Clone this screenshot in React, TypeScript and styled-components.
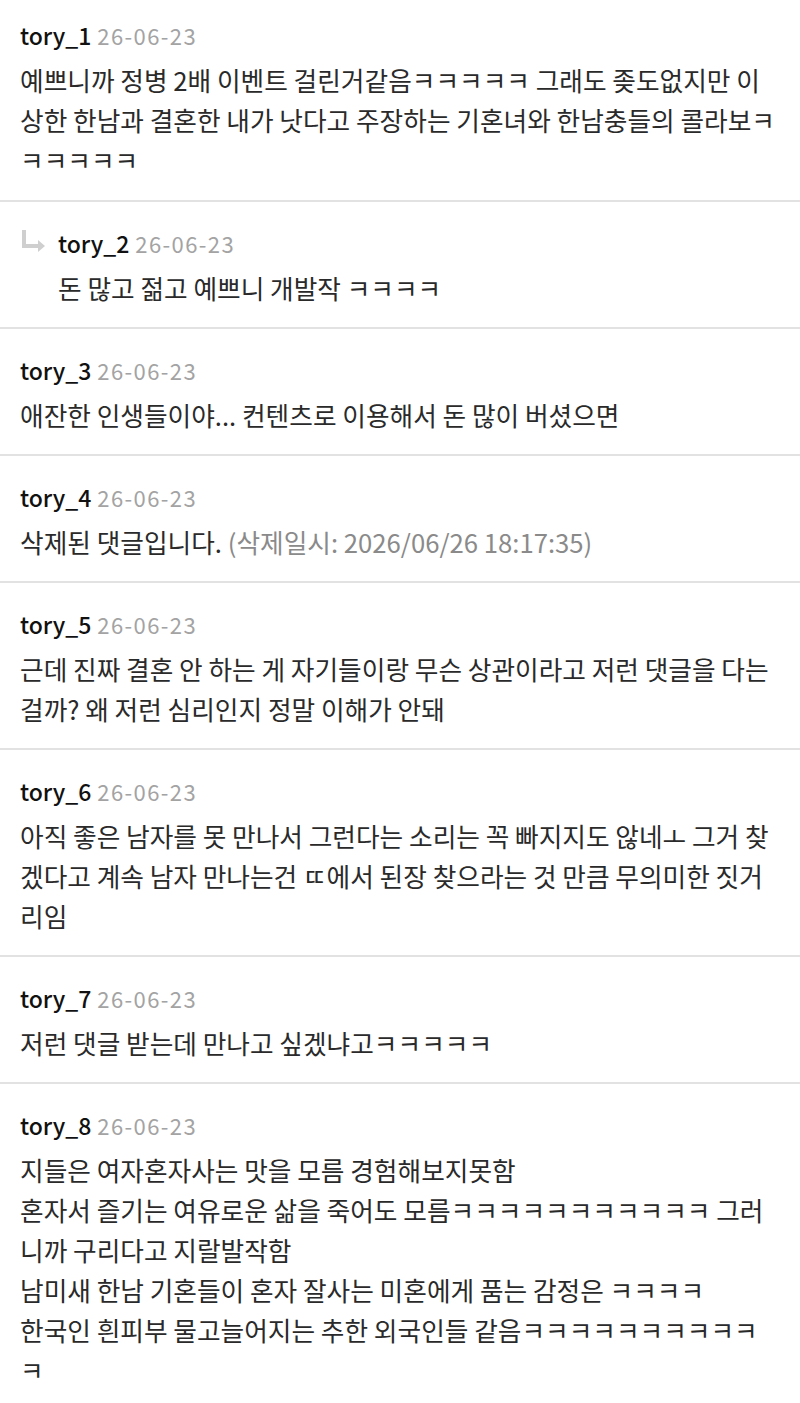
import React from 'react';
import styled, { createGlobalStyle } from "styled-components";

type Line = { text: string; muted?: string }
type CommentData = {
    name: string
    date: string
    reply?: boolean
    lines: Line[]
}

const comments: CommentData[] = [
    {
        name: "tory_1", date: "26-06-23", lines: [
            { text: "예쁘니까 정병 2배 이벤트 걸린거같음ㅋㅋㅋㅋㅋ 그래도 좆도없지만 이" },
            { text: "상한 한남과 결혼한 내가 낫다고 주장하는 기혼녀와 한남충들의 콜라보ㅋ" },
            { text: "ㅋㅋㅋㅋㅋ" },
        ]
    },
    { name: "tory_2", date: "26-06-23", reply: true, lines: [{ text: "돈 많고 젊고 예쁘니 개발작 ㅋㅋㅋㅋ" }] },
    { name: "tory_3", date: "26-06-23", lines: [{ text: "애잔한 인생들이야... 컨텐츠로 이용해서 돈 많이 버셨으면" }] },
    { name: "tory_4", date: "26-06-23", lines: [{ text: "삭제된 댓글입니다. ", muted: "(삭제일시: 2026/06/26 18:17:35)" }] },
    {
        name: "tory_5", date: "26-06-23", lines: [
            { text: "근데 진짜 결혼 안 하는 게 자기들이랑 무슨 상관이라고 저런 댓글을 다는" },
            { text: "걸까? 왜 저런 심리인지 정말 이해가 안돼" },
        ]
    },
    {
        name: "tory_6", date: "26-06-23", lines: [
            { text: "아직 좋은 남자를 못 만나서 그런다는 소리는 꼭 빠지지도 않네ㅗ 그거 찾" },
            { text: "겠다고 계속 남자 만나는건 ㄸ에서 된장 찾으라는 것 만큼 무의미한 짓거" },
            { text: "리임" },
        ]
    },
    { name: "tory_7", date: "26-06-23", lines: [{ text: "저런 댓글 받는데 만나고 싶겠냐고ㅋㅋㅋㅋㅋ" }] },
    {
        name: "tory_8", date: "26-06-23", lines: [
            { text: "지들은 여자혼자사는 맛을 모름 경험해보지못함" },
            { text: "혼자서 즐기는 여유로운 삶을 죽어도 모름ㅋㅋㅋㅋㅋㅋㅋㅋㅋㅋㅋ 그러" },
            { text: "니까 구리다고 지랄발작함" },
            { text: "남미새 한남 기혼들이 혼자 잘사는 미혼에게 품는 감정은 ㅋㅋㅋㅋ" },
            { text: "한국인 흰피부 물고늘어지는 추한 외국인들 같음ㅋㅋㅋㅋㅋㅋㅋㅋㅋㅋ" },
            { text: "ㅋ" },
        ]
    },
]

const ReplyArrow = () => (
    <ArrowSvg width="28" height="28" viewBox="0 0 28 28">
        <path d="M4 2 V18 H20" fill="none" stroke="#cfcfcf" strokeWidth="4" />
        <path d="M18 12 L25 18 L18 24 Z" fill="#cfcfcf" />
    </ArrowSvg>
)

const Comment = ({ name, date, reply, lines }: CommentData) => (
    <Item $reply={reply}>
        {reply && <ReplyArrow />}
        <Body>
            <Head>
                <Name>{name}</Name>
                <Date>{date}</Date>
            </Head>
            {lines.map((l, i) => (
                <Text key={i}>
                    {l.text}
                    {l.muted && <Muted>{l.muted}</Muted>}
                </Text>
            ))}
        </Body>
    </Item>
)

export default function App() {
    return (
        <>
            <GlobalStyle />
            <List>
                {comments.map((c) => <Comment key={c.name} {...c} />)}
            </List>
        </>
    );
}

const GlobalStyle = createGlobalStyle`
    body {
        margin: 0;
        background: #fff;
        font-family: "Noto Sans CJK KR", "Noto Sans", sans-serif;
    }
`
const List = styled.div`
    margin-top: -6px;
    overflow: hidden;
`
const Item = styled.div<{ $reply?: boolean }>`
    position: relative;
    display: flex;
    padding: 22px 20px 19px ${p => p.$reply ? "58px" : "20px"};
    border-bottom: 2px solid #e2e2e2;
    &:first-child {
        padding-bottom: 20px;
    }
`
const ArrowSvg = styled.svg`
    position: absolute;
    left: 20px;
    top: 26px;
`
const Body = styled.div`
    flex: 1;
`
const Head = styled.div`
    display: flex;
    align-items: baseline;
    gap: 6px;
    height: 44px;
    line-height: 38px;
`
const Name = styled.span`
    font-size: 23px;
    font-weight: 500;
    color: #111;
`
const Date = styled.span`
    font-size: 22px;
    letter-spacing: 1.4px;
    color: #a3a3a3;
`
const Text = styled.div`
    font-size: 25.7px;
    line-height: 40px;
    color: #2a2a2a;
    white-space: nowrap;
`
const Muted = styled.span`
    color: #8a8a8a;
`
